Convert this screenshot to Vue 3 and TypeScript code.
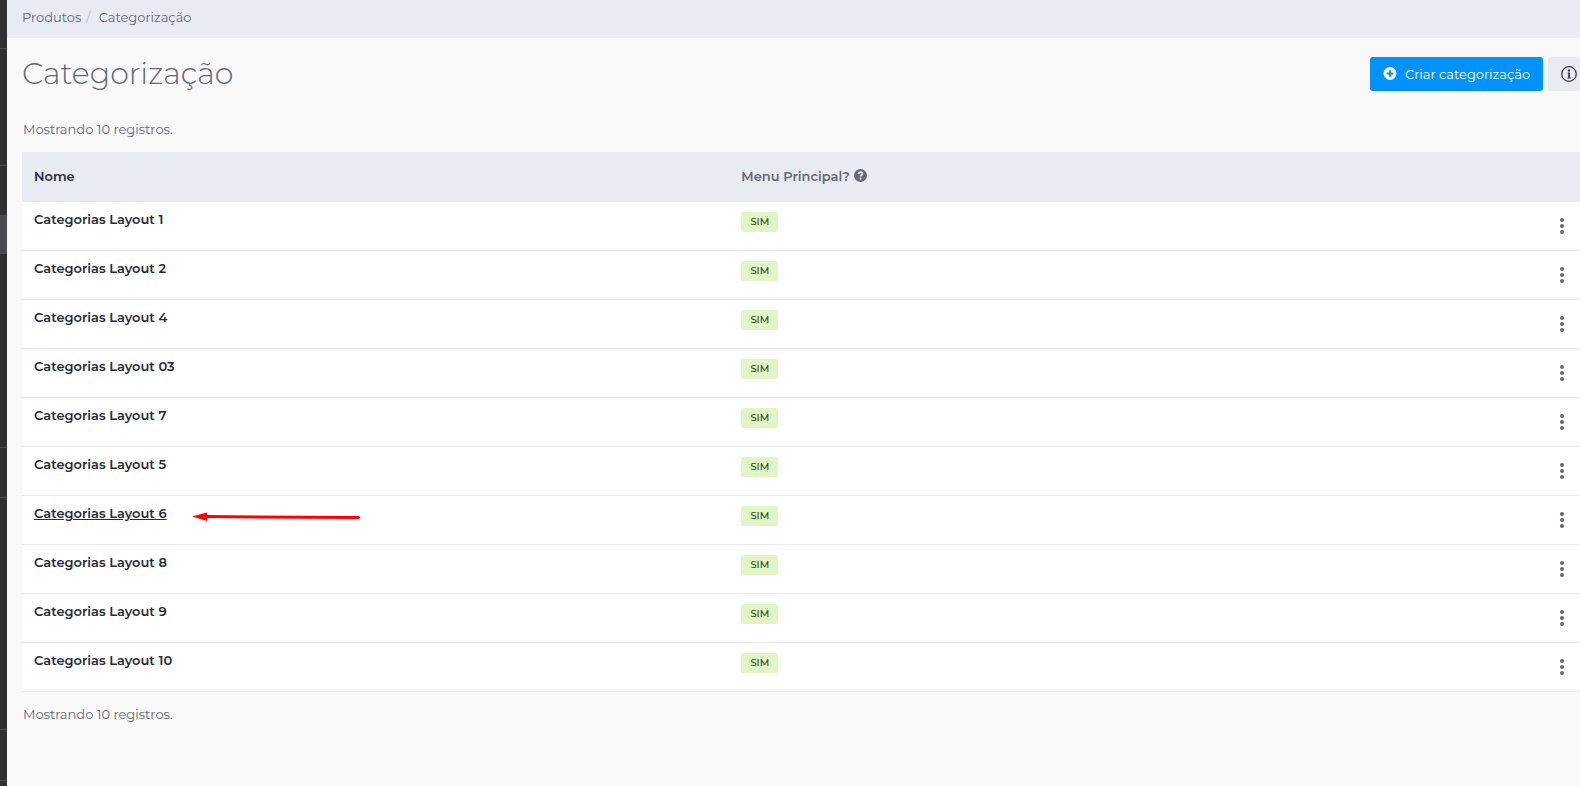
<script setup lang="ts">
interface Category {
  name: string
  highlighted?: boolean
}

const categories: Category[] = [
  { name: 'Categorias Layout 1' },
  { name: 'Categorias Layout 2' },
  { name: 'Categorias Layout 4' },
  { name: 'Categorias Layout 03' },
  { name: 'Categorias Layout 7' },
  { name: 'Categorias Layout 5' },
  { name: 'Categorias Layout 6', highlighted: true },
  { name: 'Categorias Layout 8' },
  { name: 'Categorias Layout 9' },
  { name: 'Categorias Layout 10' },
]

const railSections: string[] = ['top', 'group', 'spacer', 'active', 'modules', 'short', 'tools', 'last']
</script>

<template>
  <div class="shell">
    <aside class="rail">
      <div v-for="section in railSections" :key="section" :class="['rail-item', section]"></div>
    </aside>
    <div class="page">
      <nav class="breadcrumb" aria-label="Navegação">
        <a href="#">Produtos</a>
        <span class="slash">/</span>
        <span>Categorização</span>
      </nav>
      <main class="content">
        <header class="heading">
          <h1>Categorização</h1>
          <div class="actions">
            <button type="button" class="create">
              <svg width="14" height="14" viewBox="0 0 14 14" aria-hidden="true">
                <circle cx="7" cy="6.5" r="6.5" fill="#fff" />
                <path d="M7 4v5M4.5 6.5h5" stroke="#0093ff" stroke-width="2" stroke-linecap="round" />
              </svg>
              Criar categorização
            </button>
            <button type="button" class="info" aria-label="Informações">
              <svg width="16" height="16" viewBox="0 0 16 16" aria-hidden="true">
                <circle cx="8" cy="8" r="7.3" fill="none" stroke="#353950" stroke-width="1.3" />
                <circle cx="8" cy="4.4" r="1.2" fill="#353950" />
                <path d="M6.6 6.4H9V11.4H9.8V12.4H6.4V11.4H7.2V7.4H6.6Z" fill="#353950" />
              </svg>
            </button>
          </div>
        </header>
        <p class="count">Mostrando 10 registros.</p>
        <table>
          <thead>
            <tr>
              <th scope="col" class="col-name">Nome</th>
              <th scope="col" class="col-menu">
                <span class="menu-label">
                  Menu Principal?
                  <svg width="13" height="13" viewBox="0 0 13 13" aria-hidden="true">
                    <circle cx="6.5" cy="6.5" r="6.5" fill="#656779" />
                    <path d="M4.5 5.1C4.6 3.7 5.4 3.1 6.5 3.1C7.7 3.1 8.5 3.8 8.5 4.8C8.5 6.1 6.6 6.1 6.6 7.5" fill="none" stroke="#e8ebf2" stroke-width="1.7" />
                    <circle cx="6.6" cy="9.6" r="1.1" fill="#e8ebf2" />
                  </svg>
                </span>
              </th>
              <th class="col-menu-actions" aria-label="Ações"></th>
            </tr>
          </thead>
          <tbody>
            <tr v-for="category in categories" :key="category.name">
              <td>
                <div class="name-cell">
                  <a href="#" :class="{ underlined: category.highlighted }">{{ category.name }}</a>
                  <svg v-if="category.highlighted" class="arrow" width="168" height="10" viewBox="0 0 168 10" aria-hidden="true">
                    <path d="M14 4.6L166.5 5.5" stroke="#f00" stroke-width="3" stroke-linecap="round" />
                    <path d="M0 4.6L15 0.4V9Z" fill="#f00" />
                  </svg>
                </div>
              </td>
              <td><span class="badge">SIM</span></td>
              <td class="more-cell">
                <button type="button" class="more" :aria-label="`Opções de ${category.name}`">
                  <svg width="4" height="16" viewBox="0 0 4 16" aria-hidden="true">
                    <circle cx="2" cy="2" r="2" />
                    <circle cx="2" cy="8" r="2" />
                    <circle cx="2" cy="14" r="2" />
                  </svg>
                </button>
              </td>
            </tr>
          </tbody>
        </table>
        <p class="count footer-count">Mostrando 10 registros.</p>
      </main>
    </div>
  </div>
</template>

<style>
body {
  margin: 0;
  background: #f9f9f9;
}
</style>

<style scoped>
.shell {
  display: flex;
  min-height: 100vh;
  background: #f9f9f9;
  color: #656779;
  font-family: Montserrat, Inter, "Open Sans", sans-serif;
  font-size: 13px;
  line-height: 20px;
}
.rail {
  flex: none;
  width: 7px;
  background: #303030;
}
.rail-item {
  box-sizing: border-box;
  border-bottom: 1px solid #4b4c55;
}
.top { height: 49px; }
.group { height: 117px; }
.spacer { height: 49px; border-bottom: 0; }
.active { height: 39px; border-bottom: 0; background: #494a52; }
.modules { height: 194px; }
.short { height: 50px; }
.tools { height: 232px; }
.last { height: 51px; }
.page {
  flex: 1;
  min-width: 0;
}
.breadcrumb {
  display: flex;
  align-items: center;
  box-sizing: border-box;
  height: 38px;
  padding: 0 15px 4px;
  background: #e8ebf3;
}
.breadcrumb a {
  color: inherit;
  text-decoration: none;
}
.breadcrumb .slash {
  margin: 0 8px 0 5px;
  color: #b9bcc8;
}
.content {
  padding-left: 15px;
}
.heading {
  display: flex;
  align-items: center;
  justify-content: space-between;
  padding-top: 16px;
}
h1 {
  margin: 0;
  font-size: 30px;
  line-height: 40px;
  font-weight: 300;
}
.actions {
  display: flex;
  gap: 5px;
}
button {
  border: 0;
  font: inherit;
  cursor: pointer;
}
.create {
  display: flex;
  align-items: center;
  justify-content: center;
  gap: 8px;
  width: 173px;
  height: 34px;
  padding: 0;
  border-radius: 3px;
  background: #0093ff;
  color: #fff;
  white-space: nowrap;
}
.info {
  display: flex;
  align-items: center;
  height: 34px;
  padding: 0 3px 0 13px;
  border-radius: 3px 0 0 3px;
  background: #e8ebf2;
}
.count {
  margin: 25px 0 13px;
  padding-left: 1px;
}
table {
  width: 100%;
  table-layout: fixed;
  border-collapse: separate;
  border-spacing: 0;
  background: #fff;
}
th {
  box-sizing: border-box;
  height: 50px;
  padding: 0 12px 2px;
  border-bottom: 1px solid #e6e8ed;
  background: #e8ebf2;
  text-align: left;
  font-weight: 600;
}
.col-name {
  width: 45.4%;
  color: #272c3f;
}
.col-menu-actions {
  width: 60px;
}
.menu-label {
  display: flex;
  align-items: center;
  gap: 4px;
}
td {
  box-sizing: border-box;
  height: 49px;
  padding: 7px 12px 0;
  border-bottom: 1px solid #ececec;
  vertical-align: top;
}
.name-cell {
  position: relative;
}
.name-cell a {
  color: #272a35;
  font-weight: 600;
  text-decoration: none;
}
.name-cell .underlined {
  text-decoration: underline;
}
.arrow {
  position: absolute;
  left: 158px;
  top: 9px;
}
.badge {
  display: block;
  width: 37px;
  height: 20px;
  margin-top: 3px;
  border-radius: 2px;
  background: #e2f6c5;
  color: #35491a;
  font-size: 10px;
  font-weight: 500;
  text-align: center;
}
.more-cell {
  padding: 12px 12px 0;
}
.more {
  display: block;
  margin-left: auto;
  padding: 4px;
  background: none;
}
.more svg {
  display: block;
  fill: #656779;
}
.footer-count {
  margin: 12px 0;
}
</style>
